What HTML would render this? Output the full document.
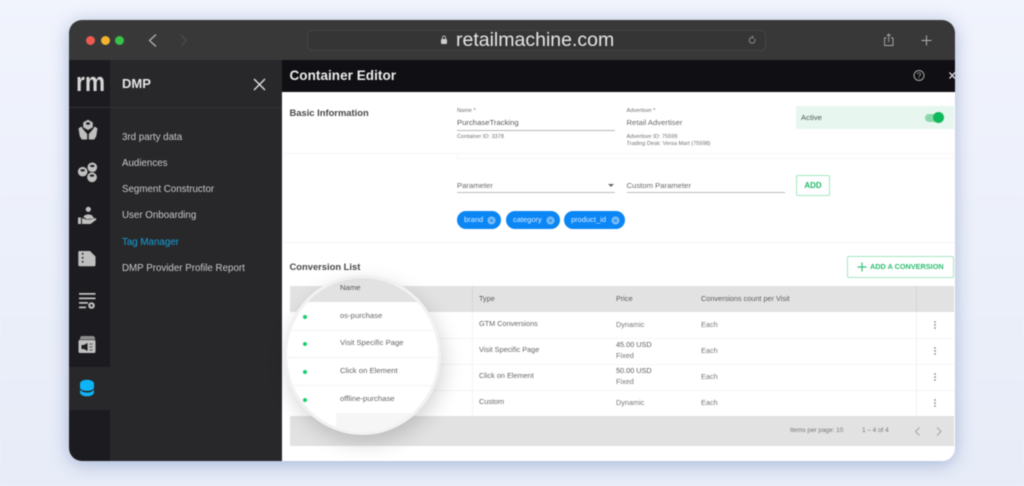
<!DOCTYPE html>
<html>
<head>
<meta charset="utf-8">
<style>
html,body{margin:0;padding:0;width:1024px;height:486px;overflow:hidden;background:#eff3fc;font-family:"Liberation Sans",sans-serif}
#p{position:relative;width:1024px;height:486px;overflow:hidden;filter:blur(.5px)}
.a{position:absolute}
.t{position:absolute;white-space:nowrap;height:14px;line-height:14px;margin-top:-7px}
.m{color:#c9c9cb;font-size:9.75px}
.l{color:#5c5c5c;font-size:7.3px}
.k{color:#707070;font-size:5.6px;height:8px;line-height:8px;margin-top:-4px}
.h{color:#484848;font-size:9.4px;font-weight:bold}
.hr{position:absolute;height:1px;background:#f5f5f5}
.chip{position:absolute;top:211px;height:18px;border-radius:9px;background:#0a86f5;color:#d8ecff;font-size:7.5px;line-height:18px;text-indent:7px}
.chip svg{position:absolute;right:5px;top:4.5px}
.dot{position:absolute;width:4px;height:4px;border-radius:50%;background:#17cf70}
.dots{position:absolute;width:2px;height:8px;left:933.5px;background:radial-gradient(circle at 1px 1px,#888 .7px,transparent 1px) 0 0/2px 3px}
</style>
</head>
<body>
<div id="p">
<div class="a" style="left:0;top:0;width:1024px;height:486px;background:linear-gradient(180deg,#f1f4fd 0%,#e7ecf8 100%)"></div>
<div class="a" style="left:69px;top:20px;width:886px;height:441px;border-radius:13px;box-shadow:0 3px 18px rgba(90,115,170,.46)"></div>
<div class="a" style="left:69px;top:20px;width:886px;height:441px;border-radius:13px;overflow:hidden;background:#fff">
  <div class="a" style="left:0;top:0;width:886px;height:40px;background:#383838"></div>
  <div class="a" style="left:0;top:40px;width:41px;height:401px;background:#1c1c20"></div>
  <div class="a" style="left:41px;top:40px;width:172px;height:401px;background:#28282b"></div>
  <div class="a" style="left:0;top:87px;width:213px;height:1px;background:#333336"></div>
  <div class="a" style="left:0;top:347px;width:41px;height:43px;background:#28282b"></div>
  <div class="a" style="left:213px;top:40px;width:673px;height:32px;background:#101014"></div>
</div>

<!-- traffic lights -->
<div class="a" style="left:86px;top:35.5px;width:9px;height:9px;border-radius:50%;background:#ec5a50"></div>
<div class="a" style="left:100.5px;top:35.5px;width:9px;height:9px;border-radius:50%;background:#f2b42d"></div>
<div class="a" style="left:115px;top:35.5px;width:9px;height:9px;border-radius:50%;background:#37c24a"></div>

<!-- toolbar svg -->
<svg class="a" style="left:0;top:0" width="1024" height="60" fill="none">
  <path d="M156 34.5L149.5 40.5L156 46.5" stroke="#b8b8b8" stroke-width="1.2"/>
  <path d="M181 35L186.5 40.5L181 46" stroke="#4e4e4e" stroke-width="1.1"/>
  <rect x="307.5" y="30.5" width="458" height="20" rx="5" fill="#353535" stroke="#444"/>
  <rect x="441" y="39" width="6" height="5" rx="1" fill="#cfcfcf"/>
  <path d="M442.5 39V37.5a1.5 1.5 0 0 1 3 0V39" stroke="#cfcfcf" stroke-width=".8"/>
  <path d="M754.5 38.6a2.9 2.9 0 1 1-2.4-1.2" stroke="#a0a0a0" stroke-width=".8"/>
  <path d="M751.8 35.8l1.5 1.5-1.5 1.2" stroke="#a0a0a0" stroke-width=".7"/>
  <path d="M886.5 38h-2v7.5h8.500v-7.500h-2M888.700 42v-8M886.800 36l1.900-2 1.900 2" stroke="#a8a8a8" stroke-width=".9"/>
  <path d="M926.5 35.5v10M921.5 40.5h10" stroke="#b0b0b0" stroke-width="1"/>
</svg>
<div class="t" style="left:456px;top:40px;color:#e6e6e6;font-size:19.5px;height:22px;line-height:22px;margin-top:-11px">retailmachine.com</div>

<!-- logo + heading -->
<div class="a" style="left:75.5px;top:66.6px;color:#d6d6d6;font-size:27px;font-weight:bold;line-height:30px;height:30px;white-space:nowrap;transform:scaleX(.84);transform-origin:0 0">rm</div>
<div class="t" style="left:122px;top:83.5px;color:#e5e5e5;font-size:13px;font-weight:bold">DMP</div>
<svg class="a" style="left:250px;top:75px" width="18" height="18"><path d="M4 4L15 15M15 4L4 15" stroke="#dedede" stroke-width="1.4"/></svg>

<!-- menu -->
<div class="t m" style="left:122px;top:137.5px">3rd party data</div>
<div class="t m" style="left:122px;top:163.5px">Audiences</div>
<div class="t m" style="left:122px;top:190px">Segment Constructor</div>
<div class="t m" style="left:122px;top:216px">User Onboarding</div>
<div class="t m" style="left:122px;top:242.5px;color:#12a0d8">Tag Manager</div>
<div class="t m" style="left:122px;top:268.5px">DMP Provider Profile Report</div>

<!-- side icons -->
<svg class="a" style="left:70px;top:110px" width="40" height="300" fill="#bfbfbf">
  <path d="M18 9.800l4.800 2.600v5l-4.800 2.600-4.800-2.600v-5z"/>
  <ellipse cx="18" cy="13.500" rx="2" ry="1.300" fill="#1c1c20"/>
  <path d="M8.500 18.500l2.700-2 3.300 4.500 2.700 3v5.500h-5.500l-2-3.500z"/>
  <path d="M27.500 18.500l-2.700-2-3.300 4.500-2.700 3v5.500h5.500l2-3.500z"/>
  <circle cx="22.300" cy="57.300" r="4.800"/><ellipse cx="22.300" cy="56" rx="2.200" ry="1.100" fill="#1c1c20"/>
  <circle cx="12.700" cy="61.700" r="4.800"/><ellipse cx="12.700" cy="60.400" rx="2.200" ry="1.100" fill="#1c1c20"/>
  <circle cx="22" cy="67.300" r="5.200" stroke="#1c1c20" stroke-width=".6"/><ellipse cx="22" cy="65.600" rx="2.200" ry="1.100" fill="#1c1c20"/>
  <circle cx="18.300" cy="99.300" r="2.600"/>
  <path d="M13.500 107c.5-3 8-3.500 9.500-.5l.8 2-7 .8z"/>
  <path d="M8 107.500h3v6.500H8zM12 108l4.500 1.600h3.500l5.500-1.600 1 1.500-6 4.500h-8.500z"/>
  <path d="M9.500 141h10.500l5.500 5.500v8.500a1.200 1.200 0 0 1-1.200 1.200H9.500A1.200 1.200 0 0 1 8.300 155v-12.800a1.200 1.200 0 0 1 1.200-1.200z"/>
  <circle cx="12.700" cy="143.800" r=".9" fill="#1c1c20"/><circle cx="12.700" cy="147.800" r=".9" fill="#1c1c20"/><circle cx="12.700" cy="151.800" r=".9" fill="#1c1c20"/>
  <path d="M9 183h16.500v1.800H9zM9 187.500h16.500v1.800H9zM9 192h9v1.800H9zM9 196.500h7v1.800H9z"/>
  <circle cx="21.500" cy="195.500" r="3.300"/><circle cx="21.500" cy="195.500" r="1.200" fill="#1c1c20"/>
  <path d="M11 226h13l1.500 3.500h-16z" fill="#8d8d8d"/>
  <rect x="8.500" y="230" width="17" height="13" rx="1.500"/>
  <path d="M11.500 235h2.500l3.500-2v8l-3.500-2h-2.500z" fill="#1c1c20"/>
  <path d="M19.500 234h3M19.500 237h3M19.500 240h3" stroke="#555" stroke-width=".9"/>
  <ellipse cx="17" cy="273.500" rx="7" ry="3.800" fill="#0eb4f5"/>
  <path d="M10 273.500v4c0 2 3 3.400 7 3.400s7-1.400 7-3.400v-4c-1 2-4 3-7 3s-6-1-7-3z" fill="#0eb4f5"/>
  <path d="M10 279.500v3c0 2 3 3.800 7 3.800s7-1.800 7-3.800v-3c-1.200 2-4 3-7 3s-5.800-1-7-3z" fill="#0eb4f5"/>
</svg>

<!-- header right -->
<div class="t" style="left:289.5px;top:75.5px;color:#ececec;font-size:13.5px;font-weight:bold;letter-spacing:.05px;height:18px;line-height:18px;margin-top:-9px">Container Editor</div>
<svg class="a" style="left:910px;top:66px" width="45" height="20" fill="none">
  <circle cx="9" cy="9.500" r="5" stroke="#a4a4a4" stroke-width="1"/>
  <path d="M7.500 8.200a1.500 1.500 0 1 1 2.300 1.300c-.6.400-.8.700-.8 1.300" stroke="#a4a4a4" stroke-width=".8"/>
  <circle cx="9" cy="12.200" r=".5" fill="#a4a4a4"/>
  <path d="M39.500 6.500L45 12.500M45 6.500L39.500 12.500" stroke="#d8d8d8" stroke-width="1.300"/>
</svg>

<!-- basic info -->
<div class="t h" style="left:289.5px;top:112.5px">Basic Information</div>
<div class="t k" style="left:457px;top:111px">Name *</div>
<div class="t" style="left:457px;top:122.5px;color:#5a5a5a;font-size:7.7px">PurchaseTracking</div>
<div class="a" style="left:457px;top:129.5px;width:158px;height:1px;background:#b8b8b8"></div>
<div class="t k" style="left:457px;top:137px">Container ID: 3378</div>
<div class="t k" style="left:626.5px;top:111px">Advertiser *</div>
<div class="t" style="left:626.5px;top:122.5px;color:#6a6a6a;font-size:7.7px">Retail Advertiser</div>
<div class="t k" style="left:626.5px;top:137px">Advertiser ID: 75599</div>
<div class="t k" style="left:626.5px;top:143.5px">Trading Desk: Versa Mart (75598)</div>
<div class="a" style="left:796px;top:105.5px;width:158px;height:23.5px;background:#e7f6ee"></div>
<div class="t" style="left:801px;top:117.5px;color:#4c5a52;font-size:7.7px">Active</div>
<div class="a" style="left:924.5px;top:113.5px;width:18px;height:8px;border-radius:4px;background:#8bd8ad"></div>
<div class="a" style="left:933px;top:112px;width:11px;height:11px;border-radius:50%;background:#0fb95b"></div>

<div class="hr" style="left:283px;top:153px;width:672px"></div>
<div class="a" style="left:457px;top:153px;width:497px;height:6px;border:1px solid #f7f7f7;border-top:0;box-sizing:border-box"></div>

<div class="t" style="left:457px;top:185.5px;color:#6a6a6a;font-size:7.7px">Parameter</div>
<div class="a" style="left:608px;top:183.5px;width:0;height:0;border-left:3px solid transparent;border-right:3px solid transparent;border-top:3.5px solid #666"></div>
<div class="a" style="left:457px;top:192px;width:158px;height:1px;background:#bdbdbd"></div>
<div class="t" style="left:626.5px;top:185.5px;color:#6a6a6a;font-size:7.7px">Custom Parameter</div>
<div class="a" style="left:626.5px;top:192px;width:158px;height:1px;background:#bdbdbd"></div>
<div class="a" style="left:796px;top:175px;width:34px;height:21px;border:1.3px solid #a2e5c0;border-radius:2px;box-sizing:border-box;color:#20b868;font-size:8px;font-weight:bold;text-align:center;line-height:19px">ADD</div>

<div class="chip" style="left:457px;width:44px">brand<svg width="9" height="9"><circle cx="4.500" cy="4.500" r="4" fill="#7fbdf5"/><path d="M3 3l3 3M6 3l-3 3" stroke="#0a86f5" stroke-width=".8"/></svg></div>
<div class="chip" style="left:506px;width:54px">category<svg width="9" height="9"><circle cx="4.500" cy="4.500" r="4" fill="#7fbdf5"/><path d="M3 3l3 3M6 3l-3 3" stroke="#0a86f5" stroke-width=".8"/></svg></div>
<div class="chip" style="left:564px;width:61px">product_id<svg width="9" height="9"><circle cx="4.500" cy="4.500" r="4" fill="#7fbdf5"/><path d="M3 3l3 3M6 3l-3 3" stroke="#0a86f5" stroke-width=".8"/></svg></div>

<div class="hr" style="left:283px;top:242px;width:672px"></div>

<!-- conversion list -->
<div class="t h" style="left:289.5px;top:266.5px">Conversion List</div>
<div class="a" style="left:847px;top:255.5px;width:107px;height:22px;border:1.2px solid #a8e6c4;border-radius:2px;box-sizing:border-box"></div>
<svg class="a" style="left:855px;top:260px" width="14" height="14"><path d="M7 2.500v9M2.500 7h9" stroke="#3cc17c" stroke-width="1.200"/></svg>
<div class="t" style="left:870px;top:266.5px;color:#2cbd72;font-size:7.3px;font-weight:bold">ADD A CONVERSION</div>

<!-- table -->
<div class="a" style="left:290px;top:286px;width:664px;height:25.5px;background:#e2e2e2"></div>
<div class="a" style="left:290px;top:415.5px;width:664px;height:30.5px;background:#e2e2e2"></div>
<div class="a" style="left:471.5px;top:311.5px;width:1px;height:104px;background:#f4f4f4"></div>
<div class="a" style="left:915.5px;top:311.5px;width:1px;height:104px;background:#f2f2f2"></div>
<div class="a" style="left:471.5px;top:286px;width:1px;height:25.5px;background:#d6d6d6"></div>
<div class="a" style="left:915.5px;top:286px;width:1px;height:25.5px;background:#d6d6d6"></div>
<div class="hr" style="left:290px;top:337.5px;width:664px"></div>
<div class="hr" style="left:290px;top:363.5px;width:664px"></div>
<div class="hr" style="left:290px;top:389.5px;width:664px"></div>

<div class="t l" style="left:479px;top:298.5px">Type</div>
<div class="t l" style="left:616px;top:298.5px">Price</div>
<div class="t l" style="left:701px;top:298.5px">Conversions count per Visit</div>

<div class="t l" style="left:479px;top:323.5px;color:#666">GTM Conversions</div>
<div class="t l" style="left:479px;top:350px;color:#666">Visit Specific Page</div>
<div class="t l" style="left:479px;top:375.5px;color:#666">Click on Element</div>
<div class="t l" style="left:479px;top:401.5px;color:#666">Custom</div>

<div class="t l" style="left:616px;top:324.5px;color:#777">Dynamic</div>
<div class="t l" style="left:616px;top:345px">45.00 USD</div>
<div class="t l" style="left:616px;top:356px;color:#777">Fixed</div>
<div class="t l" style="left:616px;top:371px">50.00 USD</div>
<div class="t l" style="left:616px;top:381.5px;color:#777">Fixed</div>
<div class="t l" style="left:616px;top:402.5px;color:#777">Dynamic</div>

<div class="t l" style="left:701px;top:324.5px;color:#777">Each</div>
<div class="t l" style="left:701px;top:350.5px;color:#777">Each</div>
<div class="t l" style="left:701px;top:376.5px;color:#777">Each</div>
<div class="t l" style="left:701px;top:402.5px;color:#777">Each</div>

<div class="dots" style="top:321px"></div>
<div class="dots" style="top:347px"></div>
<div class="dots" style="top:373px"></div>
<div class="dots" style="top:399px"></div>

<div class="t" style="left:790px;top:431px;color:#777;font-size:6.4px">Items per page: 10</div>
<div class="t" style="left:862px;top:431px;color:#777;font-size:6.4px">1 – 4 of 4</div>
<svg class="a" style="left:910px;top:424px" width="36" height="14" fill="none">
  <path d="M9.500 3.500L5.500 7.500L9.500 11.500" stroke="#a8a8a8" stroke-width="1.100"/>
  <path d="M27 3.500L31 7.500L27 11.500" stroke="#a8a8a8" stroke-width="1.100"/>
</svg>

<!-- magnifier -->
<div class="a" style="left:284px;top:275px;width:157px;height:160px;border-radius:50%;background:#fff;box-sizing:border-box;border:3px solid #f1f1f1;box-shadow:3px 8px 20px rgba(0,0,0,.17);overflow:hidden">
  <div class="a" style="left:0;top:0;width:160px;height:24px;background:#e2e2e2"></div>
  <div class="a" style="left:0;top:51.5px;width:160px;height:1px;background:#f4f4f4"></div>
  <div class="a" style="left:0;top:79px;width:160px;height:1px;background:#f4f4f4"></div>
  <div class="a" style="left:0;top:107px;width:160px;height:1px;background:#f4f4f4"></div>
  <div class="a" style="left:49px;top:135px;width:110px;height:25px;background:#f6f6f6"></div>
</div>
<div class="t" style="left:340px;top:288px;color:#555;font-size:7.7px">Name</div>
<div class="t" style="left:340px;top:315.5px;color:#666;font-size:7.7px">os-purchase</div>
<div class="t" style="left:340px;top:343px;color:#666;font-size:7.7px">Visit Specific Page</div>
<div class="t" style="left:340px;top:370.5px;color:#666;font-size:7.7px">Click on Element</div>
<div class="t" style="left:340px;top:398.5px;color:#666;font-size:7.7px">offline-purchase</div>
<div class="dot" style="left:302.5px;top:314.5px"></div>
<div class="dot" style="left:302.5px;top:342px"></div>
<div class="dot" style="left:302.5px;top:370px"></div>
<div class="dot" style="left:302.5px;top:397.5px"></div>
</div>
</body>
</html>
